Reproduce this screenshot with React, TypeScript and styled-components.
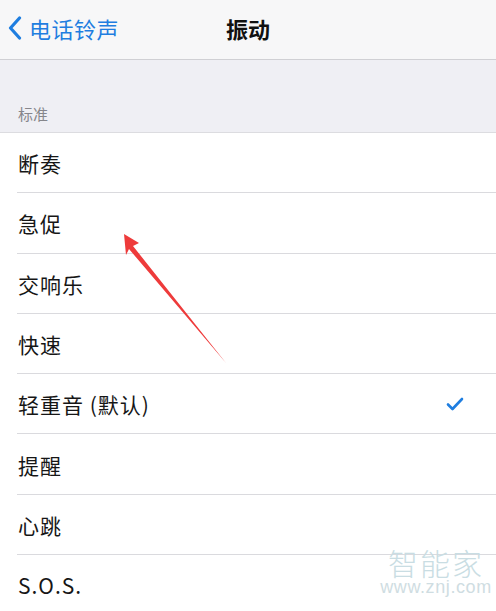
import styled, { createGlobalStyle } from "styled-components"

const Global = createGlobalStyle`
  html, body {
    margin: 0;
    padding: 0;
    background: #ffffff;
    font-family: "Noto Sans CJK SC", "Noto Sans", sans-serif;
  }
`

const Screen = styled.div`
  position: relative;
  width: 496px;
  height: 611px;
  overflow: hidden;
  background: #ffffff;
`

const NavBar = styled.div`
  display: grid;
  grid-template-columns: 1fr auto 1fr;
  align-items: center;
  background: #f7f7f8;
  border-bottom: 1px solid #d0d0d4;
  box-sizing: border-box;
  height: 60px;
`

const BackButton = styled.div`
  display: flex;
  align-items: center;
  gap: 7px;
  padding-left: 8px;
  color: #1f7ee0;
  font-size: 22px;
  letter-spacing: 0.5px;
  padding-bottom: 3px;
`

const Title = styled.div`
  font-size: 22px;
  font-weight: 700;
  color: #111;
  padding-bottom: 3px;
`

const SectionGap = styled.div`
  height: 73px;
  background: #efeff4;
  display: flex;
  align-items: flex-end;
  padding: 0 0 8px 18px;
  box-sizing: border-box;
  border-bottom: 1px solid #dcdce0;
`

const SectionLabel = styled.span`
  font-size: 15px;
  color: #86868b;
`

const List = styled.div`
  display: flex;
  flex-direction: column;
`

const Row = styled.div<{ $last?: boolean }>`
  position: relative;
  height: 60.3px;
  display: flex;
  align-items: center;
  justify-content: space-between;
  padding: 0 32px 0 18px;
  font-size: 21px;
  letter-spacing: 1px;
  color: #161616;
  box-sizing: border-box;
  &::after {
    content: "";
    position: absolute;
    left: 17px;
    right: 0;
    bottom: 0;
    height: 1px;
    background: ${({ $last }) => ($last ? "transparent" : "#dadade")};
  }
`

const Watermark = styled.div`
  position: absolute;
  right: 11px;
  bottom: 15px;
  width: 98px;
  display: flex;
  flex-direction: column;
  align-items: center;
  gap: 1px;
  color: #c9dde3;
  pointer-events: none;
`

const WatermarkBig = styled.span`
  font-size: 30px;
  line-height: 30px;
  letter-spacing: 2px;
  font-weight: 300;
`

const WatermarkSmall = styled.span`
  font-family: "Liberation Sans", "DejaVu Sans", sans-serif;
  font-size: 18px;
  line-height: 18px;
  letter-spacing: 0.6px;
  white-space: nowrap;
  color: #cfdde2;
`

const ArrowLayer = styled.svg`
  position: absolute;
  left: 0;
  top: 0;
  pointer-events: none;
`

const items = ["断奏", "急促", "交响乐", "快速", "轻重音 (默认)", "提醒", "心跳", "S.O.S."]

export default function App() {
  return (
    <Screen>
      <Global />
      <NavBar>
        <BackButton>
          <svg width="14" height="24" viewBox="0 0 14 24">
            <path d="M11.5 2 L2.5 12 L11.5 22" fill="none" stroke="#1f7ee0" strokeWidth="3.2" strokeLinecap="round" strokeLinejoin="round" />
          </svg>
          <span>电话铃声</span>
        </BackButton>
        <Title>振动</Title>
        <div />
      </NavBar>
      <SectionGap>
        <SectionLabel>标准</SectionLabel>
      </SectionGap>
      <List>
        {items.map((t, i) => (
          <Row key={t} $last={i === items.length - 1}>
            <span>{t}</span>
            {i === 4 && (
              <svg width="18" height="14" viewBox="0 0 18 14">
                <path d="M2 7.5 L6.5 12 L16 2" fill="none" stroke="#1f7ee0" strokeWidth="2.6" strokeLinecap="round" strokeLinejoin="round" />
              </svg>
            )}
          </Row>
        ))}
      </List>
      <ArrowLayer width="496" height="611">
        <polygon points="124,234 139,243 133,246 226,363 129,249 126,255" fill="#ee3b3b" />
      </ArrowLayer>
      <Watermark>
        <WatermarkBig>智能家</WatermarkBig>
        <WatermarkSmall>www.znj.com</WatermarkSmall>
      </Watermark>
    </Screen>
  )
}
